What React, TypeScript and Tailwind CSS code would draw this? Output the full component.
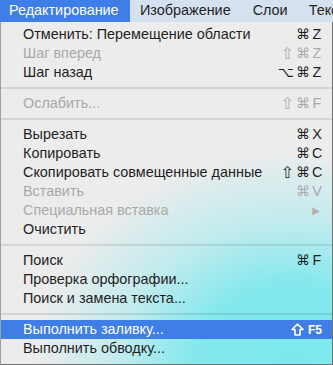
import React from 'react';

type Item = {
  label: string;
  shortcut?: string;
  disabled?: boolean;
  submenu?: boolean;
  active?: boolean;
};

type Entry = Item | 'sep';

const entries: Entry[] = [
  { label: 'Отменить: Перемещение области', shortcut: '⌘Z' },
  { label: 'Шаг вперед', shortcut: '⇧⌘Z', disabled: true },
  { label: 'Шаг назад', shortcut: '⌥⌘Z' },
  'sep',
  { label: 'Ослабить...', shortcut: '⇧⌘F', disabled: true },
  'sep',
  { label: 'Вырезать', shortcut: '⌘X' },
  { label: 'Копировать', shortcut: '⌘C' },
  { label: 'Скопировать совмещенные данные', shortcut: '⇧⌘C' },
  { label: 'Вставить', shortcut: '⌘V', disabled: true },
  { label: 'Специальная вставка', disabled: true, submenu: true },
  { label: 'Очистить' },
  'sep',
  { label: 'Поиск', shortcut: '⌘F' },
  { label: 'Проверка орфографии...' },
  { label: 'Поиск и замена текста...' },
  'sep',
  { label: 'Выполнить заливку...', active: true },
  { label: 'Выполнить обводку...' },
];

function Shortcut({ value }: { value: string }) {
  const chars = value.split('');
  return (
    <span className="flex items-center gap-[2px]">
      {chars.map((c, i) => (
        <span
          key={i}
          className={
            c === '⌘' || c === '⌥'
              ? 'font-["DejaVu_Sans",sans-serif] text-[14px]'
              : c === '⇧'
                ? 'font-["DejaVu_Sans",sans-serif] text-[16px] leading-none'
                : 'w-[10px] text-center'
          }
        >
          {c}
        </span>
      ))}
    </span>
  );
}

function Row({ item }: { item: Item }) {
  const color = item.active ? 'text-white' : item.disabled ? 'text-[#a9a9a9]' : 'text-[#1f1f1f]';
  return (
    <div
      className={`flex h-[19px] items-center justify-between pl-[22px] pr-[10px] ${color} ${
        item.active ? 'bg-[#3f7ee6]' : ''
      }`}
    >
      <span className="whitespace-nowrap">{item.label}</span>
      {item.shortcut && <Shortcut value={item.shortcut} />}
      {item.submenu && <span className="pr-[2px] text-[10px] text-[#b0b0b0]">▶</span>}
      {item.active && (
        <span className="flex items-center gap-[4px] text-[12px] font-bold">
          <svg width="13" height="13" viewBox="0 0 13 13" fill="none">
            <path d="M6.5 1 L12 6.5 H9 V12 H4 V6.5 H1 Z" stroke="white" strokeWidth="1.6" strokeLinejoin="round" />
          </svg>
          F5
        </span>
      )}
    </div>
  );
}

export default function App() {
  return (
    <div className="h-[365px] w-[333px] overflow-hidden bg-white font-['Liberation_Sans','DejaVu_Sans',sans-serif] text-[14.4px]">
      <div className="flex h-[22px] items-center overflow-hidden bg-[#d5e1ef] text-[#1f1f1f]">
        <div className="flex h-full w-[130px] shrink-0 items-center bg-[#3f7ee6] pl-[9px] text-white">Редактирование</div>
        <div className="shrink-0 pl-[10px]">Изображение</div>
        <div className="shrink-0 pl-[22px]">Слои</div>
        <div className="shrink-0 whitespace-nowrap pl-[21px]">Текст</div>
      </div>
      <div className="h-[343px] w-[333px] border-x-[1.5px] border-b-[1.5px] border-l-[#a0a0a0] border-r-[#707070] border-b-[#707070] bg-[radial-gradient(ellipse_78%_62%_at_88%_100%,#7ce9ef_0%,#84e8ed_38%,#bfebee_66%,#ececec_100%)] pt-[3px]">
        {entries.map((e, i) =>
          e === 'sep' ? (
            <div key={i} className="flex h-[12px] items-center">
              <div className="h-[2px] w-full bg-black/10" />
            </div>
          ) : (
            <Row key={i} item={e} />
          )
        )}
      </div>
    </div>
  );
}
